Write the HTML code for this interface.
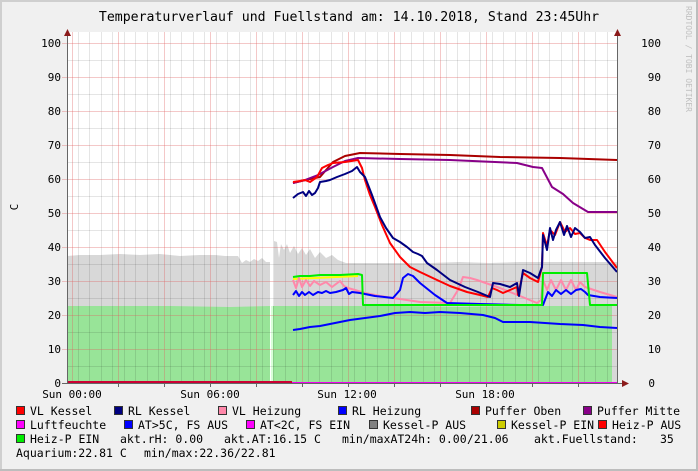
<!DOCTYPE html>
<html><head><meta charset="utf-8"><style>
body{margin:0;background:#f0f0f0}
svg{display:block}
text{font-family:"DejaVu Sans Mono","Liberation Mono",monospace;}
</style></head><body>
<svg width="698" height="471" xmlns="http://www.w3.org/2000/svg">
<rect x="0" y="0" width="698" height="471" fill="#f0f0f0"/>
<rect x="0.5" y="0.5" width="697" height="470" fill="none" stroke="#cfcfcf" stroke-width="1"/>
<rect x="0" y="0" width="698" height="2" fill="#cfcfcf"/>
<rect x="0" y="0" width="2" height="471" fill="#cfcfcf"/>
<rect x="696" y="0" width="2" height="471" fill="#bdbdbd"/>
<rect x="0" y="469" width="698" height="2" fill="#bdbdbd"/>
<text x="349" y="21" font-size="13.2" text-anchor="middle" fill="#000">Temperaturverlauf und Fuellstand am: 14.10.2018, Stand 23:45Uhr</text>
<text transform="translate(686,6) rotate(90)" font-size="8" fill="#c0c0c0">RRDTOOL / TOBI OETIKER</text>
<rect x="67" y="32" width="550" height="351" fill="#fff"/>
<!-- gray area -->
<path d="M67,383 L67,256 L80,255 L100,255 L120,254 L140,255 L160,254 L180,256 L200,255 L215,255 L225,256 L238,256 L242,263 L246,260 L250,262 L254,259 L258,261 L262,258 L266,262 L270,262 L270,383 Z" fill="#d8d8d8"/>
<path d="M274,383 L274,241 L277,242 L279,258 L281,244 L284,250 L287,244 L290,253 L294,246 L298,254 L302,248 L306,255 L310,249 L315,258 L320,252 L326,258 L332,255 L338,260 L346,263 L360,263 L400,263 L430,263 L460,262 L490,263 L520,262 L560,262 L590,262 L617,262 L617,383 Z" fill="#d8d8d8"/>
<!-- green area -->
<path d="M67,383 L67,306 L120,306 L170,306 L230,307 L270,306 L270,383 Z" fill="#98e498"/>
<path d="M273,383 L273,306 L340,306 L400,306 L460,307 L520,306 L560,306 L612,306 L612,383 Z" fill="#98e498"/>
<rect x="271" y="306" width="2" height="77" fill="#d8ffd8"/>
<!-- grid -->
<g stroke="#000" stroke-opacity="0.1" stroke-width="1">
<path d="M78.5,32V383M89.5,32V383M101.5,32V383M112.5,32V383M124.5,32V383M135.5,32V383M147.5,32V383M158.5,32V383M170.5,32V383M181.5,32V383M193.5,32V383M204.5,32V383M216.5,32V383M227.5,32V383M239.5,32V383M250.5,32V383M262.5,32V383M273.5,32V383M285.5,32V383M296.5,32V383M308.5,32V383M319.5,32V383M331.5,32V383M342.5,32V383M354.5,32V383M365.5,32V383M377.5,32V383M388.5,32V383M400.5,32V383M411.5,32V383M423.5,32V383M434.5,32V383M446.5,32V383M457.5,32V383M469.5,32V383M480.5,32V383M492.5,32V383M503.5,32V383M515.5,32V383M526.5,32V383M538.5,32V383M549.5,32V383M561.5,32V383M572.5,32V383M584.5,32V383M595.5,32V383M607.5,32V383"/>
<path d="M67,366.5H617M67,332.5H617M67,298.5H617M67,264.5H617M67,230.5H617M67,196.5H617M67,162.5H617M67,128.5H617M67,94.5H617M67,60.5H617"/>
</g>
<g stroke="#e06060" stroke-opacity="0.35" stroke-width="1">
<path d="M72.5,32V383M118.5,32V383M164.5,32V383M210.5,32V383M256.5,32V383M302.5,32V383M348.5,32V383M394.5,32V383M440.5,32V383M486.5,32V383M532.5,32V383M578.5,32V383"/>
<path d="M62,349.5H617M62,315.5H617M62,281.5H617M62,247.5H617M62,213.5H617M62,179.5H617M62,145.5H617M62,111.5H617M62,77.5H617M62,43.5H617"/>
</g>
<!-- lines -->
<g fill="none" stroke-width="2" stroke-linejoin="round">
<polyline stroke="#ffff00" points="293,279 358,276"/>
<polyline stroke="#0000ff" points="293,330 300,329 310,327 320,326 335,323 350,320 365,318 380,316 395,313 410,312 425,313 440,312 460,313 483,315 495,318 503,322 530,322 560,324 583,325 600,327 617,328"/>
<polyline stroke="#ff88aa" points="293,280 296,288 299,278 302,287 306,280 310,286 314,281 320,285 326,282 332,287 336,284 340,281 344,286 348,288 355,290 365,293 380,296 400,299 420,302 450,303 458,290 463,277 470,278 477,280 500,288 520,296 537,303 541,300 543,280 547,290 551,280 556,290 561,280 566,290 571,280 576,290 580,282 585,287 600,292 617,297"/>
<polyline stroke="#0000ff" points="293,295 296,291 299,296 302,292 305,295 309,292 313,295 318,292 322,293 326,291 330,293 336,292 343,290 346,288 349,294 352,292 360,293 375,296 393,298 400,290 403,278 408,274 413,276 420,283 435,295 447,303 480,304 520,305 543,305 548,292 552,296 556,290 561,294 566,290 571,294 576,290 581,289 585,292 588,295 600,297 617,298"/>
<polyline stroke="#00ee00" points="293,277 300,276 310,276 320,275 330,275 340,275 358,274 362,275 363,305 400,305 450,305 500,305 542,305 543,273 587,273 590,305 617,305"/>
<polyline stroke="#aa0000" points="293,183 310,179 320,177 333,162 345,156 360,153 400,154 450,155 500,157 560,158 617,160"/>
<polyline stroke="#880088" points="293,183 305,180 318,175 333,167 345,161 358,158 400,159 450,160 517,163 533,167 542,168 552,187 563,194 573,203 588,212 617,212"/>
<polyline stroke="#ff0000" points="293,182 300,181 305,180 310,182 317,177 322,168 328,165 333,163 345,162 358,160 362,168 365,180 370,195 375,207 382,225 390,243 400,257 410,267 420,272 437,280 450,286 467,292 480,295 488,297 492,288 497,290 503,293 510,290 517,287 518,295 523,273 530,278 538,282 542,267 543,233 547,246 550,230 555,235 560,222 565,232 570,228 575,234 580,233 585,238 590,240 597,240 605,252 617,268"/>
<polyline stroke="#000080" points="293,198 298,194 303,192 306,196 309,191 312,195 315,193 318,188 320,182 326,181 330,180 337,177 345,174 352,171 357,167 360,172 365,177 372,195 380,217 386,228 393,238 400,242 407,247 413,252 418,254 422,256 427,263 437,270 450,280 465,287 478,292 490,297 493,283 500,284 510,287 517,283 519,296 523,270 530,273 538,278 542,267 543,235 547,250 550,228 553,240 556,230 560,222 564,235 567,226 571,237 575,228 580,232 585,238 590,237 595,245 605,258 617,272"/>
</g>
<!-- axes -->
<rect x="67" y="381" width="225" height="3" fill="#cc0033"/>
<rect x="292" y="382" width="325" height="2" fill="#ee00ee"/>
<path d="M67.5,384V36M617.5,384V36M62,383.5H622" stroke="#666" stroke-width="1"/>
<path d="M64,36L67.5,29L71,36Z M614,36L617.5,29L621,36Z M622,380L629,383.5L622,387Z" fill="#8b1a1a"/>
<path d="M118.5,383v4M164.5,383v4M210.5,383v4M256.5,383v4M302.5,383v4M348.5,383v4M394.5,383v4M440.5,383v4M486.5,383v4M532.5,383v4M578.5,383v4" stroke="#666"/>
<g font-size="11" fill="#000" text-anchor="end">
<text x="61" y="387">0</text><text x="61" y="353">10</text><text x="61" y="319">20</text><text x="61" y="285">30</text><text x="61" y="251">40</text><text x="61" y="217">50</text><text x="61" y="183">60</text><text x="61" y="149">70</text><text x="61" y="115">80</text><text x="61" y="81">90</text><text x="61" y="47">100</text>
<text x="655" y="387">0</text><text x="661" y="353">10</text><text x="661" y="319">20</text><text x="661" y="285">30</text><text x="661" y="251">40</text><text x="661" y="217">50</text><text x="661" y="183">60</text><text x="661" y="149">70</text><text x="661" y="115">80</text><text x="661" y="81">90</text><text x="661" y="47">100</text>
</g>
<text transform="translate(18,207) rotate(-90)" font-size="11" text-anchor="middle">C</text>
<g font-size="11" text-anchor="middle">
<text x="72" y="398">Sun 00:00</text><text x="210" y="398">Sun 06:00</text><text x="347" y="398">Sun 12:00</text><text x="485" y="398">Sun 18:00</text>
</g>
<!-- legend -->
<g stroke="#333" stroke-width="1">
<rect x="16.5" y="406.5" width="8" height="8" fill="#ff0000"/>
<rect x="114.5" y="406.5" width="8" height="8" fill="#000080"/>
<rect x="218.5" y="406.5" width="8" height="8" fill="#ff88aa"/>
<rect x="338.5" y="406.5" width="8" height="8" fill="#0000ff"/>
<rect x="471.5" y="406.5" width="8" height="8" fill="#aa0000"/>
<rect x="583.5" y="406.5" width="8" height="8" fill="#880088"/>
<rect x="16.5" y="420.5" width="8" height="8" fill="#ff00ff"/>
<rect x="124.5" y="420.5" width="8" height="8" fill="#0000ff"/>
<rect x="246.5" y="420.5" width="8" height="8" fill="#ff00ff"/>
<rect x="369.5" y="420.5" width="8" height="8" fill="#808080"/>
<rect x="497.5" y="420.5" width="8" height="8" fill="#cccc00"/>
<rect x="598.5" y="420.5" width="8" height="8" fill="#ff0000"/>
<rect x="16.5" y="434.5" width="8" height="8" fill="#00ee00"/>
</g>
<g font-size="11.5" fill="#000" xml:space="preserve">
<text x="30" y="415">VL Kessel</text>
<text x="128" y="415">RL Kessel</text>
<text x="232" y="415">VL Heizung</text>
<text x="352" y="415">RL Heizung</text>
<text x="485" y="415">Puffer Oben</text>
<text x="597" y="415">Puffer Mitte</text>
<text x="30" y="429">Luftfeuchte</text>
<text x="138" y="429">AT&gt;5C, FS AUS</text>
<text x="260" y="429">AT&lt;2C, FS EIN</text>
<text x="383" y="429">Kessel-P AUS</text>
<text x="511" y="429">Kessel-P EIN</text>
<text x="612" y="429">Heiz-P AUS</text>
<text x="30" y="443">Heiz-P EIN</text>
<text x="120" y="443">akt.rH: 0.00</text>
<text x="224" y="443">akt.AT:16.15 C</text>
<text x="342" y="443">min/maxAT24h: 0.00</text>
<text x="467" y="443">/21.06</text>
<text x="534" y="443">akt.Fuellstand:</text>
<text x="660" y="443">35</text>
<text x="16" y="457">Aquarium:22.81 C</text>
<text x="144" y="457">min/max:22.36/22.81</text>
</g>
</svg>
</body></html>
